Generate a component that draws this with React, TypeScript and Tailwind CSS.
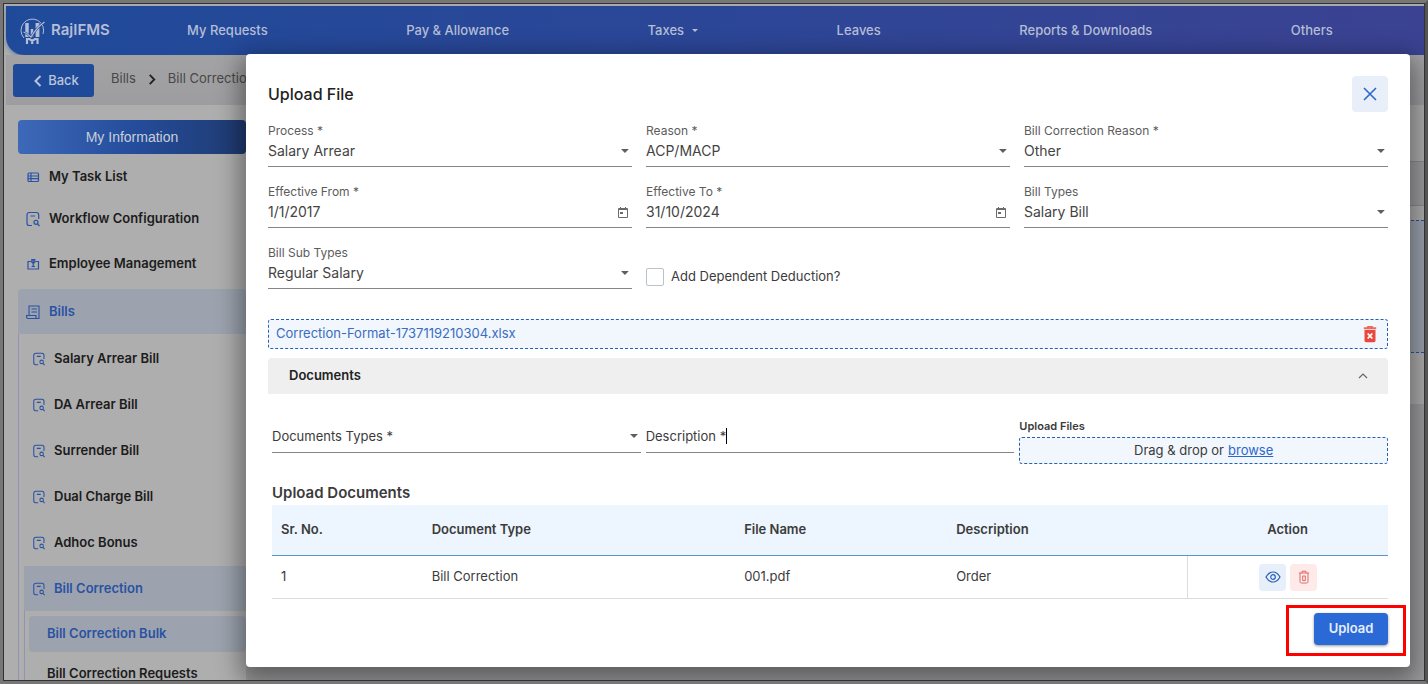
import React from "react";

function LogoMark() {
  return (
    <svg viewBox="0 0 28 28" className="h-7 w-7" fill="none" stroke="#b4bed6">
      <path d="M5 21A11.300 11.300 0 1 1 24 17" strokeWidth="1" />
      <path d="M8 6v14" strokeWidth="3.500" />
      <path d="M13 12v8" strokeWidth="2.500" />
      <path d="M18.500 6v14" strokeWidth="3.800" />
      <path d="M4.500 15c3 1 5 2.500 7.500 5C15.500 14 20 9 25.500 5" stroke="#1f4a9a" strokeWidth="2.200" />
      <path d="M4.500 15c3 1 5 2.500 7.500 5C15.500 14 20 9 25.500 5" strokeWidth="1.200" />
      <path d="M8 27v-5h2.500l2.700 2 2.700-2h2.600v5M13.200 24v3" strokeWidth="2.200" />
    </svg>
  );
}

function SearchDoc({ className = "h-4 w-4" }: { className?: string }) {
  return (
    <svg viewBox="0 0 16 16" className={className} fill="none" stroke="#2a52a3" strokeWidth="1.200">
      <path d="M7 14.500H4.200C2.500 14.500 2 13.500 2 12V4c0-1.800.8-2.500 2.500-2.500h7c1.600 0 2.200.8 2.200 2.500v4M5.500 5H10" />
      <circle cx="11" cy="11.300" r="2" />
      <path d="M12.500 13l2 2" />
    </svg>
  );
}

function TableIcon() {
  return (
    <svg viewBox="0 0 16 16" className="h-4 w-4" fill="none" stroke="#2a52a3" strokeWidth="1.200">
      <rect x="3" y="4" width="10.500" height="8.500" rx="1" />
      <path d="M3 7h10.500M3 9.700h10.500M6 4v8.500" />
    </svg>
  );
}

function BadgeIcon() {
  return (
    <svg viewBox="0 0 16 16" className="h-4 w-4" fill="none" stroke="#2a52a3" strokeWidth="1.200">
      <path d="M6 5.500H3v7.500h10.500V5.500h-3" />
      <path d="M8.250 3v4M6.800 3.500h3v2.800l-1.500 1.200-1.500-1.200zM8.250 7v4M6.500 10.500h3.500" />
    </svg>
  );
}

function BillIcon() {
  return (
    <svg viewBox="0 0 16 16" className="h-4 w-4" fill="none" stroke="#2a52a3" strokeWidth="1.100">
      <path d="M4 11.500V2h10v12.500H2.800c-1 0-1.300-.8-1.300-3H11v3M6.500 5H12M6.500 8H12" />
    </svg>
  );
}

function Caret() {
  return (
    <svg viewBox="0 0 8 4" className="h-1 w-2" fill="#5f5f5f">
      <path d="M0 0h8L4 4z" />
    </svg>
  );
}

function CalendarIcon() {
  return (
    <svg viewBox="0 0 12 12" className="h-3 w-3" fill="none" stroke="#6a6a6a">
      <path d="M1.500 2.500h9v9h-9zM1.500 3.500h9M3.500 1v2M8.500 1v2" />
      <rect x="3" y="6" width="3" height="2" fill="#6a6a6a" stroke="none" />
    </svg>
  );
}

const fieldText = "h-6 w-full appearance-none bg-transparent text-sm leading-6 text-[#444] outline-none";

function SelectField({ id, label, value }: { id: string; label: string; value: string }) {
  return (
    <div className="flex flex-col border-b border-[#858585] pb-[3px]">
      <label htmlFor={id} className="text-xs leading-4 text-[#5c5c5c]">{label}</label>
      <div className="flex items-center pr-[3px]">
        <select id={id} className={fieldText}>
          <option>{value}</option>
        </select>
        <Caret />
      </div>
    </div>
  );
}

function DateField({ id, label, value }: { id: string; label: string; value: string }) {
  return (
    <div className="flex flex-col border-b border-[#858585] pb-[3px]">
      <label htmlFor={id} className="text-xs leading-4 text-[#5c5c5c]">{label}</label>
      <div className="flex items-center pr-[3px]">
        <input id={id} defaultValue={value} className={fieldText} />
        <button type="button" aria-label={`Choose ${label}`}><CalendarIcon /></button>
      </div>
    </div>
  );
}

const navItems = ["My Requests", "Pay & Allowance", "Taxes", "Leaves", "Reports & Downloads", "Others"];
const billItems = ["Salary Arrear Bill", "DA Arrear Bill", "Surrender Bill", "Dual Charge Bill", "Adhoc Bonus"];

function Header() {
  return (
    <header className="flex h-[49px] shrink-0 items-center rounded-bl-[18px] bg-linear-to-r from-[#1f4a9a] via-[#2c4697] to-[#3b4292] pl-[13px] pr-[18px] text-[#b4bed6] shadow-[0_2px_4px_#6f83ab]">
      <a href="#home" className="flex items-center gap-1 text-[15px] font-semibold">
        <LogoMark />
        RajIFMS
      </a>
      <nav className="flex flex-1 justify-around pl-2 pr-1 text-[13px] font-medium">
        {navItems.map((item) => (
          <a key={item} href="#menu" className="flex items-center gap-2">
            {item}
            {item === "Taxes" && (
              <svg viewBox="0 0 6 3" className="h-[3px] w-1.5" fill="currentColor"><path d="M0 0h6L3 3z" /></svg>
            )}
          </a>
        ))}
      </nav>
    </header>
  );
}

function Sidebar() {
  return (
    <aside className="w-[240px] shrink-0 pl-3 pt-[15px] text-[13px] font-semibold text-[#1c1c1c]">
      <div className="flex h-[34px] items-center justify-center rounded bg-linear-to-r from-[#3d69b8] via-[#244d9c] to-[#1f3a70] font-['Liberation_Sans',sans-serif] text-sm font-normal text-[#c9ced8]">
        My Information
      </div>
      <nav className="pt-px">
        <a href="#tasks" className="flex h-11 items-center gap-2 pl-[7px]"><TableIcon />My Task List</a>
        <a href="#workflow" className="flex h-10 items-center gap-2 pl-[7px]"><SearchDoc />Workflow Configuration</a>
        <a href="#employees" className="flex h-[50px] items-center gap-2 pl-[7px]"><BadgeIcon />Employee Management</a>
        <a href="#bills" className="flex h-[45px] items-center gap-2 rounded-t bg-[#9ca3ae] pl-[7px] text-[#2a52a3]"><BillIcon />Bills</a>
        <div className="border-l border-[#9094b0] pl-[5px] pt-0.5">
          {billItems.map((item) => (
            <a key={item} href="#bill" className="flex h-[46px] items-center gap-2 pl-2">
              <SearchDoc className="h-3.5 w-3.5" />
              {item}
            </a>
          ))}
          <a href="#correction" className="flex h-[45px] items-center gap-2 bg-[#9ca3ae] pl-2 text-[#2a52a3]">
            <SearchDoc className="h-3.5 w-3.5" />
            Bill Correction
          </a>
          <div className="border-l border-[#9094b0] pl-1 pt-[5px]">
            <a href="#bulk" className="flex h-9 items-center rounded bg-[#9ca3ae] pl-[18px] text-[#2a52a3]">Bill Correction Bulk</a>
            <a href="#requests" className="flex h-11 items-center pl-[18px]">Bill Correction Requests</a>
          </div>
        </div>
      </nav>
    </aside>
  );
}

function UploadDialog() {
  return (
    <section role="dialog" aria-labelledby="dialog-title" className="ml-[246px] mr-[18px] mt-[54px] rounded bg-white px-[22px] py-[22px] text-[#3b3b3b] shadow-[0_8px_24px_6px_rgba(0,0,0,0.4)]">
      <div className="flex items-center justify-between">
        <h1 id="dialog-title" className="text-base font-medium text-[#222]">Upload File</h1>
        <button type="button" aria-label="Close" className="flex h-9 w-9 items-center justify-center rounded bg-[#e8eff9]">
          <svg viewBox="0 0 14 14" className="h-3.5 w-3.5" stroke="#2b67cc" strokeWidth="1.600" fill="none"><path d="M1 1l12 12M13 1L1 13" /></svg>
        </button>
      </div>

      <form className="mt-[11px] grid grid-cols-3 gap-x-3.5 gap-y-[17px]">
        <SelectField id="process" label="Process *" value="Salary Arrear" />
        <SelectField id="reason" label="Reason *" value="ACP/MACP" />
        <SelectField id="correction-reason" label="Bill Correction Reason *" value="Other" />
        <DateField id="from" label="Effective From *" value="1/1/2017" />
        <DateField id="to" label="Effective To *" value="31/10/2024" />
        <SelectField id="bill-types" label="Bill Types" value="Salary Bill" />
        <SelectField id="sub-types" label="Bill Sub Types" value="Regular Salary" />
        <label className="flex items-center gap-[7px] pt-5 text-[13px]">
          <input type="checkbox" className="h-[18px] w-[18px] appearance-none rounded-xs border border-[#b9c3cb] bg-white" />
          Add Dependent Deduction?
        </label>
      </form>

      <div className="mt-[30px] flex h-[30px] items-center justify-between rounded-[3px] border border-dashed border-[#2460b5] bg-[#f1f7fd] pl-[7px] pr-2.5">
        <a href="#file" className="text-[13px] text-[#3a6cc0]">Correction-Format-1737119210304.xlsx</a>
        <button type="button" aria-label="Remove file">
          <svg viewBox="0 0 14 18" className="h-[18px] w-3.5">
            <path d="M1.500 5h11v10.500c0 1-.7 1.700-1.700 1.700H3.200c-1 0-1.700-.7-1.700-1.700z" fill="#e8493c" />
            <path d="M.8 2.200h2.700L4.500 1h5l1 1.200h2.700v2H.8z" fill="#ef6a5d" />
            <path d="M4.700 8.500l4.600 5M9.300 8.500l-4.600 5" stroke="#fff" strokeWidth="1.800" />
          </svg>
        </button>
      </div>

      <button type="button" aria-expanded="true" className="mt-[9px] flex h-9 w-full items-center justify-between rounded-t-sm bg-[#efefef] pl-[21px] pr-5 text-[13px] font-semibold text-[#222]">
        Documents
        <svg viewBox="0 0 10 6" className="h-1.5 w-2.5" stroke="#666" strokeWidth="1.200" fill="none"><path d="M1 5l4-4 4 4" /></svg>
      </button>

      <div className="pl-1">
        <div className="mt-6 grid grid-cols-3 items-start gap-[5px]">
          <div className="flex h-[35px] items-end border-b border-[#858585] pb-1 pr-[3px]">
            <select aria-label="Documents Types *" className="h-6 w-full appearance-none bg-transparent text-[13px] leading-6 outline-none">
              <option>Documents Types *</option>
            </select>
            <span className="flex h-6 items-center"><Caret /></span>
          </div>
          <div className="flex h-[35px] items-end border-b border-[#858585] pb-1">
            <label htmlFor="description" className="shrink-0 text-[13px] leading-6">Description *</label>
            <span className="mb-1 h-4 w-px bg-black" />
            <input id="description" className="h-6 min-w-0 flex-1 bg-transparent text-[13px] outline-none" />
          </div>
          <div>
            <h2 className="text-[11px] font-semibold leading-4">Upload Files</h2>
            <div className="mt-[3px] flex h-[27px] items-center justify-center gap-1 rounded-[3px] border border-dashed border-[#2460b5] bg-[#f1f7fd] text-[13px]">
              <span>Drag &amp; drop or</span>
              <button type="button" className="text-[#2b67cc] underline">browse</button>
            </div>
          </div>
        </div>

        <h2 className="mt-[17px] text-[15px] font-semibold leading-6">Upload Documents</h2>
        <table className="w-full table-fixed border-separate border-spacing-0 text-left text-[13px]">
          <thead className="bg-[#edf5fe]">
            <tr className="h-[51px] *:border-b *:border-[#5e93c9] *:px-[9px] *:py-0 *:font-semibold">
              <th className="w-[13.500%]">Sr. No.</th>
              <th className="w-[28%]">Document Type</th>
              <th className="w-[19%]">File Name</th>
              <th className="w-[21.500%]">Description</th>
              <th className="w-[18%] text-center">Action</th>
            </tr>
          </thead>
          <tbody>
            <tr className="h-[43px] text-[13px] *:border-b *:border-[#dcdcdc] *:px-[9px] *:py-0">
              <td>1</td>
              <td>Bill Correction</td>
              <td>001.pdf</td>
              <td>Order</td>
              <td className="border-l border-l-[#cfcfcf]">
                <div className="flex justify-center gap-1">
                  <button type="button" aria-label="View" className="flex h-[27px] w-[27px] items-center justify-center rounded bg-[#e6effa]">
                    <svg viewBox="0 0 16 12" className="h-3 w-4" fill="none" stroke="#2b5fb8" strokeWidth="1.200">
                      <path d="M1 6c2-3.500 4.500-5 7-5s5 1.500 7 5c-2 3.500-4.500 5-7 5S3 9.500 1 6z" />
                      <circle cx="8" cy="6" r="2.300" />
                    </svg>
                  </button>
                  <button type="button" aria-label="Delete" className="flex h-[27px] w-[27px] items-center justify-center rounded bg-[#fdeae9]">
                    <svg viewBox="0 0 12 14" className="h-3.5 w-3" fill="none" stroke="#dd6a66">
                      <path d="M1 3h10M4 3V1.200h4V3M2 3v8.500c0 1 .5 1.500 1.500 1.500h5c1 0 1.500-.5 1.500-1.500V3M4.700 6h2.600v4.500H4.700z" />
                    </svg>
                  </button>
                </div>
              </td>
            </tr>
          </tbody>
        </table>
      </div>

      <div className="mt-3.5 flex justify-end">
        <div className="relative">
          <button type="button" className="block h-8 w-[74px] rounded bg-[#2b6ad6] text-[13px] font-semibold text-[#e6eefb] shadow-[0_1px_3px_rgba(0,0,0,0.4)]">Upload</button>
          <span className="pointer-events-none absolute -bottom-[11px] -left-7 -right-[18px] -top-2 border-3 border-[#ff0000]" />
        </div>
      </div>
    </section>
  );
}

export default function App() {
  return (
    <div className="h-screen overflow-hidden border-[3px] border-[#777] border-r-[#555] bg-[#333] font-['Inter','Noto_Sans',sans-serif]">
      <div className="relative flex h-full flex-col overflow-hidden border border-[#333] bg-[#aeaeae] pl-0.5 pt-0.5">
        <Header />
        <div className="flex h-[50px] shrink-0 items-start bg-linear-to-b from-[#a3a3a5] to-[#9d9d9f] pl-[7px] pt-[9px] text-[13px] text-[#474747]">
          <button type="button" className="flex h-[33px] w-[81px] items-center justify-center gap-1.5 rounded-[3px] bg-[#1f4a9a] pl-1.5 text-[13px] font-medium text-[#b9c4da]">
            <svg viewBox="0 0 8 12" className="h-3 w-2" fill="none" stroke="currentColor" strokeWidth="2"><path d="M6.500 1l-5 5 5 5" /></svg>
            Back
          </button>
          <div className="ml-[17px] flex h-[30px] items-center gap-3">
            <a href="#bills">Bills</a>
            <svg viewBox="0 0 8 12" className="h-[11px] w-2" fill="none" stroke="#222" strokeWidth="2"><path d="M1.500 1l5 5-5 5" /></svg>
            <a href="#correction">Bill Correction</a>
          </div>
        </div>
        <div className="flex min-h-0 flex-1">
          <Sidebar />
          <main className="flex-1 bg-[#9d9d9f]">
            <div className="h-[57px] border-b border-[#8c8c8c] bg-[#aeaeae]" />
            <div className="h-11 border-b border-[#8c8c8c]" />
            <div className="h-3.5 bg-[#aeaeae]" />
            <div className="h-[133px] border-y border-dashed border-[#2a52a3] bg-[#9ca3ae]" />
            <div className="h-[51px] bg-[#aeaeae]" />
          </main>
        </div>
        <div className="absolute -left-1 -right-1 -top-1">
          <UploadDialog />
        </div>
      </div>
    </div>
  );
}
